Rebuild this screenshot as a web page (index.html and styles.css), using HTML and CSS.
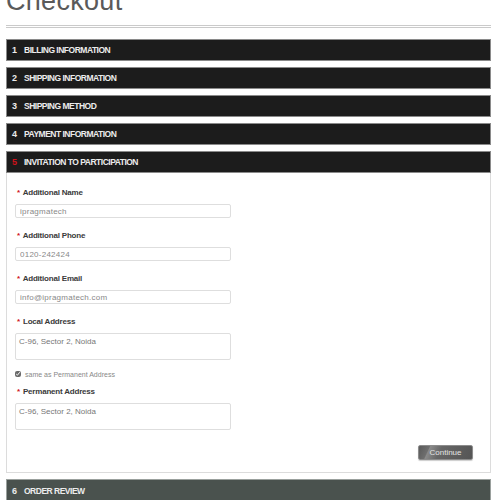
FILE: index.html
```html
<!DOCTYPE html>
<html>
<head>
<meta charset="utf-8">
<link rel="stylesheet" href="styles.css">
</head>
<body>
<div class="page">
  <h1 class="title">Checkout</h1>
  <div class="rule"></div>
  <ol class="steps">
    <li class="step"><div class="step-head"><span class="num">1</span><span class="name">BILLING INFORMATION</span></div></li>
    <li class="step"><div class="step-head"><span class="num">2</span><span class="name">SHIPPING INFORMATION</span></div></li>
    <li class="step"><div class="step-head"><span class="num">3</span><span class="name">SHIPPING METHOD</span></div></li>
    <li class="step"><div class="step-head"><span class="num">4</span><span class="name">PAYMENT INFORMATION</span></div></li>
    <li class="step active">
      <div class="step-head"><span class="num">5</span><span class="name">INVITATION TO PARTICIPATION</span></div>
      <div class="step-body">
        <div class="field">
          <label class="label"><em>*</em> Additional Name</label>
          <input class="input" type="text" value="ipragmatech">
        </div>
        <div class="field">
          <label class="label"><em>*</em> Additional Phone</label>
          <input class="input" type="text" value="0120-242424">
        </div>
        <div class="field">
          <label class="label"><em>*</em> Additional Email</label>
          <input class="input" type="text" value="info@ipragmatech.com">
        </div>
        <div class="field tight">
          <label class="label"><em>*</em> Local Address</label>
          <textarea class="area">C-96, Sector 2, Noida</textarea>
        </div>
        <div class="check-row">
          <input class="check" type="checkbox" checked>
          <span class="check-label">same as Permanent Address</span>
        </div>
        <div class="field tight">
          <label class="label"><em>*</em> Permanent Address</label>
          <textarea class="area">C-96, Sector 2, Noida</textarea>
        </div>
        <div class="actions">
          <button class="btn" type="button">Continue</button>
        </div>
      </div>
    </li>
    <li class="step review"><div class="step-head"><span class="num">6</span><span class="name">ORDER REVIEW</span></div></li>
  </ol>
</div>
</body>
</html>
```

FILE: styles.css
```css
* { box-sizing: border-box; }
html, body { margin: 0; padding: 0; background: #fff; overflow: hidden; }
body { font-family: "Liberation Sans", Arial, sans-serif; }

.page { padding: 0 9px 0 6px; width: 500px; }

.title {
  margin: -12px 0 0 0;
  height: 37px;
  font-size: 27px;
  line-height: 27px;
  font-weight: normal;
  color: #5a5a5a;
  letter-spacing: 0.3px;
}

.rule {
  height: 3px;
  border-top: 1px solid #cacaca;
  border-bottom: 1px solid #cacaca;
  margin-bottom: 11px;
}

.steps { list-style: none; margin: 0; padding: 0; }
.step { margin-bottom: 6px; }

.step-head {
  height: 22px;
  background: #1c1c1c;
  border: 1px solid #8a8a8a;
  display: flex;
  align-items: center;
  padding-left: 5px;
  color: #ececec;
  font-weight: bold;
  font-size: 8.5px;
}
.num { width: 12px; font-size: 9px; }
.name { letter-spacing: -0.5px; }
.active .num { color: #d0121b; }

.review .step-head { background: #4a524e; border-color: #9aa09d; height: 24px; }

.step-body {
  border: 1px solid #dcdcdc;
  border-top: 0;
  padding: 15px 17px 12px 8px;
}

.field { display: flex; flex-direction: column; margin-bottom: 13px; }
.field.tight { margin-bottom: 0; }

.label {
  height: 10px;
  line-height: 10px;
  margin: 0 0 6px 2px;
  font-size: 8px;
  font-weight: bold;
  color: #3a3a3a;
  letter-spacing: -0.2px;
}
.label em { font-style: normal; color: #d0121b; margin-right: 1px; }

.input {
  width: 216px;
  height: 14px;
  border: 1px solid #dedede;
  border-radius: 2px;
  padding: 0 4px;
  font-family: "Liberation Sans", Arial, sans-serif;
  font-size: 8px;
  letter-spacing: 0.25px;
  color: #888;
  background: #fff;
  outline: none;
}

.area {
  width: 216px;
  height: 27px;
  border: 1px solid #dedede;
  border-radius: 2px;
  padding: 3px 3px;
  font-family: "Liberation Sans", Arial, sans-serif;
  font-size: 8px;
  line-height: 10px;
  color: #777;
  resize: none;
  background: #fff;
  outline: none;
  overflow: hidden;
}

.check-row {
  display: flex;
  align-items: center;
  height: 10px;
  margin: 9px 0 8px 0;
}
.check {
  width: 6px;
  height: 6px;
  margin: 0 4px 0 0;
  accent-color: #6a6a6a;
}
.check-label { font-size: 7px; color: #888; }

.actions { display: flex; justify-content: flex-end; margin-top: 15px; }
.btn {
  width: 55px;
  height: 15px;
  border: 1px solid #8c8c8c;
  border-radius: 2px;
  background: linear-gradient(115deg, #5a5a5a 0%, #6e6e6e 18%, #8a8a8a 20%, #666 40%, #555 100%);
  color: #e4e4e4;
  font-family: "Liberation Sans", Arial, sans-serif;
  font-size: 8px;
  padding: 0;
  box-shadow: 0 1px 1px rgba(0,0,0,0.2);
}
```
